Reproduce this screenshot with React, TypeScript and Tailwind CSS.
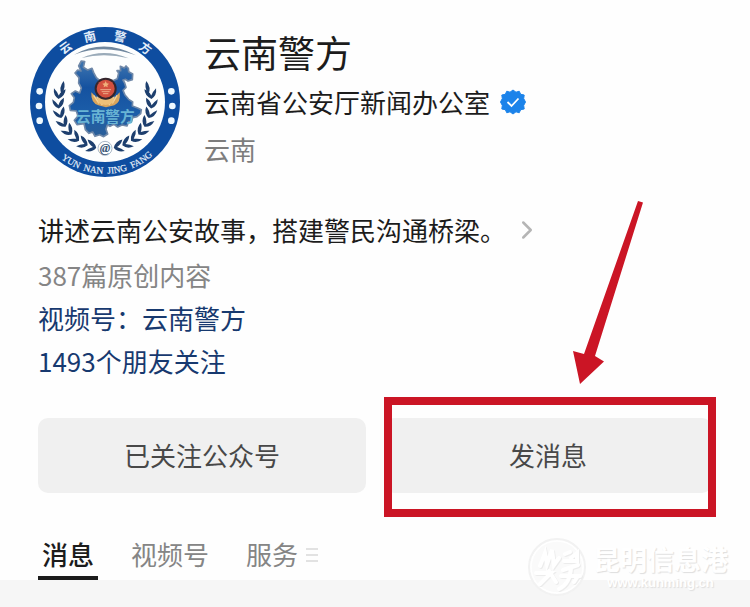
import { ChevronRight } from 'lucide-react';

const tabs = [
  { id: 'messages', label: '消息', active: true },
  { id: 'channels', label: '视频号', active: false },
  { id: 'services', label: '服务', active: false, menu: true },
];

const leafAngles = [10, -2, -14, -26, -38, -50, -62, -73];

const ringChars = [
  { char: '云', angle: -36 },
  { char: '南', angle: -13 },
  { char: '警', angle: 13 },
  { char: '方', angle: 37 },
];

const Laurel = () => (
  <g fill="#1d3f6e">
    {leafAngles.map((angle) => (
      <g key={angle} transform={`translate(255 247) rotate(${angle}) translate(-139 0)`}>
        <path d="M0 15 Q-18 8 -19 -14 Q-9 -7 -1 5 Q4 -10 16 -17 Q18 4 0 15Z" />
      </g>
    ))}
    <path d="M131 184 Q139 202 125 224 Q115 204 131 184Z" />
  </g>
);

const Emblem = () => (
  <svg viewBox="30 22 450 450" className="size-[150px] shrink-0 overflow-visible" role="img" aria-label="云南警方">
    <defs>
      <path id="ring-bottom" d="M40 247 A215 215 0 0 0 470 247" transform="rotate(-2 255 247)" />
      <linearGradient id="map-fill" x1="0" y1="0" x2="0" y2="1">
        <stop offset="0" stopColor="#3f76b0" />
        <stop offset="0.35" stopColor="#1552a0" />
        <stop offset="0.7" stopColor="#1c5ea9" />
        <stop offset="1" stopColor="#2b5f98" />
      </linearGradient>
    </defs>
    <circle cx="255" cy="247" r="225" fill="#0e4da0" />
    <circle cx="255" cy="247" r="180" fill="#fdfefe" />
    {ringChars.map(({ char, angle }) => (
      <text
        key={char}
        transform={`rotate(${angle} 255 247)`}
        x="255"
        y="59"
        textAnchor="middle"
        fontSize="36"
        fontWeight="700"
        fill="#e3eefa"
      >
        {char}
      </text>
    ))}
    <text fontSize="28" fill="#eaf3fc" className="font-['Liberation_Serif',serif]" stroke="#eaf3fc" strokeWidth="0.5">
      <textPath href="#ring-bottom" startOffset="50%" textAnchor="middle">
        {'YUN\u00a0\u00a0NAN\u00a0\u00a0JING\u00a0\u00a0FANG'}
      </textPath>
    </text>
    {[215, 259, 303].map((y) => (
      <g key={y} fill="#eef8ff">
        <circle cx={y === 259 ? 57 : 59} cy={y} r="10" />
        <circle cx={y === 259 ? 457 : 454} cy={y} r="10" />
      </g>
    ))}
    <path d="M162 105 Q252 55 348 107 Q252 72 162 105Z" fill="#71889f" />
    <path d="M185 115 Q252 84 326 116 Q252 98 185 115Z" fill="#9aabb9" />
    <path
      d="M184 124 L194 126 L190 143 L203 151 L216 146 L221 159 L229 174 L237 181 L264 179 L279 183 L292 177 L296 160 L291 153 L302 153 L301 140 L313 145 L318 139 L325 146 L326 156 L338 163 L337 180 L324 184 L317 179 L309 181 L314 190 L318 203 L309 212 L315 226 L326 239 L338 247 L337 259 L353 265 L364 270 L362 282 L351 291 L338 294 L334 307 L326 306 L321 319 L306 316 L293 322 L282 314 L270 320 L262 316 L258 329 L263 343 L251 351 L239 345 L225 350 L218 337 L207 341 L196 330 L192 312 L171 315 L163 302 L174 289 L169 274 L151 272 L148 258 L160 248 L163 234 L154 222 L166 214 L179 220 L184 205 L176 190 L177 174 L165 160 L173 151 L183 154 L176 139 Z"
      fill="url(#map-fill)"
      stroke="#6f88a8"
      strokeWidth="5"
      strokeLinejoin="round"
    />
    <text x="256" y="308" textAnchor="middle" fontSize="44" fontWeight="700" fill="#69b4d4">
      云南警方
    </text>
    <path d="M214 218 Q212 250 235 257 L258 263 L283 257 Q303 248 299 218 L281 237 L257 243 L233 237Z" fill="#d9a55c" />
    <path d="M221 227 L237 251 M230 231 L247 256 M291 227 L277 251 M283 231 L267 256" stroke="#f6d59a" strokeWidth="4" />
    <path d="M236 228 Q257 250 278 228 L281 248 Q257 264 233 248Z" fill="#edc078" />
    <circle cx="257" cy="207" r="33" fill="#34262d" />
    <circle cx="257" cy="207" r="27" fill="#d2503f" />
    <path d="M257 184 L260 191 L267 192 L262 197 L263 203 L257 200 L251 203 L252 197 L247 192 L254 191Z" fill="#f0b07a" />
    <path d="M241 210 H273 M245 216 H269 M249 222 H265" stroke="#edaa86" strokeWidth="3" />
    <Laurel />
    <g transform="translate(510 0) scale(-1 1)">
      <Laurel />
    </g>
    <circle cx="255" cy="386" r="21" fill="#fdfefe" stroke="#8496ab" strokeWidth="2" />
    <text
      x="255"
      y="397"
      textAnchor="middle"
      fontSize="38"
      fontStyle="italic"
      fontWeight="700"
      fill="#3c5878"
      className="font-['Liberation_Serif',serif]"
    >
      @
    </text>
  </svg>
);

const VerifiedBadge = () => (
  <svg viewBox="0 0 26 26" className="size-[26px] shrink-0" role="img" aria-label="已认证">
    <path
      d="M13 1 L16 3.2 L19.2 2.2 L20.7 5.3 L24.2 6 L23.7 9.6 L25.5 13 L23.7 16.4 L24.2 20 L20.7 20.7 L19.2 23.8 L16 22.8 L13 25 L10 22.8 L6.8 23.8 L5.3 20.7 L1.8 20 L2.3 16.4 L.5 13 L2.3 9.6 L1.8 6 L5.3 5.3 L6.8 2.2 L10 3.2Z"
      fill="#1b83ea"
      stroke="#1b83ea"
      strokeLinejoin="round"
    />
    <path d="M7.5 13 L11.5 17 L18.5 9.5" fill="none" stroke="#fff" strokeWidth="1.8" />
  </svg>
);

const Arrow = () => (
  <svg
    viewBox="0 0 72 184"
    className="pointer-events-none absolute bottom-full left-[188px] mb-[34px] h-[184px] w-[72px]"
    aria-hidden="true"
  >
    <path d="M66 1 L71 2.5 L23 156 L32 161.5 L8 184 L1 151 L12 154Z" fill="#cb1525" />
  </svg>
);

const Watermark = () => (
  <div className="pointer-events-none absolute right-[22px] bottom-[10px] flex items-center gap-1.5">
    <svg viewBox="0 0 60 60" className="size-[60px]" aria-hidden="true">
      <circle cx="30" cy="30" r="28" fill="#fafafa" stroke="#f2f2f2" strokeWidth="2" />
      <circle cx="30" cy="30" r="26" fill="none" stroke="#fff" strokeWidth="1.5" />
      <g fill="none" strokeLinecap="round">
        {['#ececec', '#fff'].map((color, i) => (
          <g key={color} stroke={color} strokeWidth="4" transform={i === 0 ? 'translate(1 1)' : undefined}>
            <path d="M13 29 L18 16 L20 27 L25 13 L27 28 L32 21" />
            <path d="M9 36 H24 L13 47 M22 34 L29 45" />
            <path d="M38 17 L43 15 M37 24 H50 V16 L44 21 M36 33 L51 28 M34 39 H53 M44 31 Q43 47 32 52 M51 39 L47 45" />
          </g>
        ))}
      </g>
    </svg>
    <div className="flex flex-col items-center text-white [text-shadow:1px_1px_1px_#dedede]">
      <span className="text-[27px] leading-8 font-bold">昆明信息港</span>
      <span className="font-['Liberation_Sans',sans-serif] text-[13px] leading-4 font-bold">www.kunming.cn</span>
    </div>
  </div>
);

const App = () => {
  return (
    <main className="relative flex min-h-screen flex-col bg-[#fefefe] font-['Noto_Sans_CJK_SC',sans-serif] text-[26px] text-[#1c1c1c]">
      <header className="flex gap-6 px-[30px] pt-[27px]">
        <Emblem />
        <div className="min-w-0">
          <h1 className="text-[37px] leading-[50px] font-normal">云南警方</h1>
          <div className="flex items-center gap-2.5 leading-[50px]">
            <span>云南省公安厅新闻办公室</span>
            <VerifiedBadge />
          </div>
          <p className="leading-[44px] text-[#7d7d7d]">云南</p>
        </div>
      </header>

      <section className="mt-[30px] px-[38px]">
        <a href="#about" className="flex items-center gap-1.5 leading-[46px]">
          讲述云南公安故事，搭建警民沟通桥梁。
          <ChevronRight size={30} strokeWidth={2} className="text-[#b5b5b5]" />
        </a>
        <p className="leading-[43px] text-[#858585]">387篇原创内容</p>
        <a href="#channel" className="block leading-[43px] text-[#17396f]">视频号：云南警方</a>
        <a href="#friends" className="block leading-[43px] text-[#17396f]">1493个朋友关注</a>
      </section>

      <div className="mt-9 flex gap-[18px] px-[38px] text-[#484848]">
        <button type="button" className="h-[75px] flex-1 rounded-[10px] bg-[#f0f0f0] pb-0.5">
          已关注公众号
        </button>
        <div className="relative flex-1">
          <button type="button" className="h-[75px] w-full rounded-[10px] bg-[#f0f0f0] pb-0.5">
            发消息
          </button>
          <div className="pointer-events-none absolute -top-[21px] -right-1 -bottom-6 left-0 border-8 border-[#cb1525]" />
          <Arrow />
        </div>
      </div>

      <nav className="mt-10 flex gap-[29px] px-[38px]">
        {tabs.map((tab) => (
          <button
            key={tab.id}
            type="button"
            className={`flex h-[47px] items-start border-b-4 px-1 leading-[42px] ${
              tab.active ? 'border-[#1c1c1c] font-medium' : 'border-transparent text-[#858585]'
            }`}
          >
            {tab.label}
            {tab.menu && (
              <svg viewBox="0 0 12 16" className="mt-3.5 ml-2 h-4 w-3" aria-hidden="true">
                <path d="M0 2 H12 M0 8 H12 M0 14 H12" stroke="#e2e2e2" strokeWidth="2" />
              </svg>
            )}
          </button>
        ))}
      </nav>
      <div className="flex-1 bg-[#f6f6f6]" />
      <Watermark />
    </main>
  );
};

export default App;
